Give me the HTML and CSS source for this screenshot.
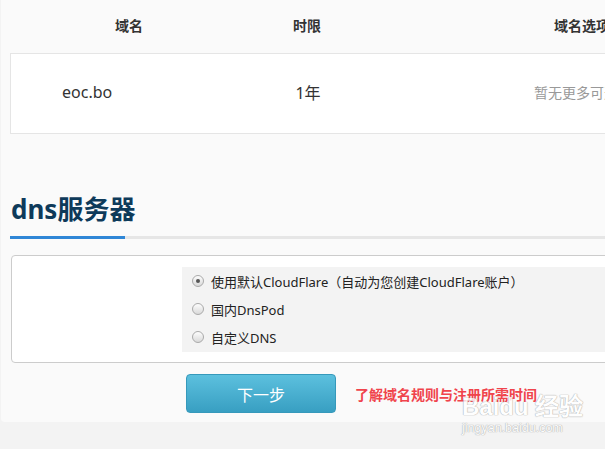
FILE: index.html
```html
<!DOCTYPE html>
<html lang="zh-CN">
<head>
  <meta charset="UTF-8" />
  <meta name="viewport" content="width=device-width, initial-scale=1.0"/>
  <title>域名注册 — dns服务器</title>
  <link rel="stylesheet" href="styles.css">
</head>
<body>
  <div class="panel">
    <div class="domain-table">
      <div class="thead">
        <div class="th">域名</div>
        <div class="th">时限</div>
        <div class="th">域名选项</div>
      </div>
      <div class="tbody">
        <div class="td td-name">eoc.bo</div>
        <div class="td">1年</div>
        <div class="td td-muted">暂无更多可选项</div>
      </div>
    </div>

    <section class="dns">
      <h2 class="section-title">dns服务器</h2>
      <div class="title-line"><span class="title-bar"></span></div>

      <div class="dns-box">
        <div class="dns-options">
          <label class="option"><span class="radio checked"></span>使用默认CloudFlare（自动为您创建CloudFlare账户）</label>
          <label class="option"><span class="radio"></span>国内DnsPod</label>
          <label class="option"><span class="radio"></span>自定义DNS</label>
        </div>
      </div>

      <div class="actions">
        <button class="btn-next">下一步</button>
        <a class="rules-link" href="#">了解域名规则与注册所需时间</a>
      </div>
    </section>
  </div>

  <div class="watermark">
    <span class="wm-logo">Bai<span class="wm-paw">du</span> 经验</span>
    <span class="wm-url">jingyan.baidu.com</span>
  </div>
</body>
</html>
```

FILE: styles.css
```css
* { box-sizing: border-box; margin: 0; padding: 0; }
body {
  background-color: #f3f3f3;
  color: #333;
  font-family: "Noto Sans", "Noto Sans CJK SC", sans-serif;
  overflow: hidden;
  position: relative;
  height: 449px;
}
.panel {
  background-color: #fafafa;
  border-radius: 0 0 0 4px;
  margin-left: 1px;
  padding: 0 0 9px 9px;
  width: 820px;
}

/* domain table */
.thead, .tbody {
  display: grid;
  grid-template-columns: 238px 118px 432px;
}
.thead {
  align-items: center;
  height: 53px;
  padding-bottom: 4px;
}
.th {
  color: #333;
  font-size: 14px;
  font-weight: bold;
  text-align: center;
}
.tbody {
  align-items: center;
  background-color: #fff;
  border: 1px solid #e5e5e5;
  height: 81px;
  padding-bottom: 4px;
}
.td {
  font-size: 16px;
  text-align: center;
}
.td-name {
  padding-left: 51px;
  text-align: left;
}
.td-muted {
  color: #999;
  font-size: 14px;
}

/* dns section */
.dns { padding-top: 57px; }
.section-title {
  color: #0e3a5a;
  font-size: 26px;
  font-weight: bold;
  line-height: 36px;
  padding-left: 1px;
}
.title-line {
  border-bottom: 3px solid #e6e6e6;
  margin-top: 9px;
}
.title-bar {
  background-color: #2f86d6;
  display: block;
  height: 3px;
  margin-bottom: -3px;
  width: 115px;
}
.dns-box {
  background-color: #fff;
  border: 1px solid #ccc;
  border-radius: 4px;
  margin: 16px 0 0 1px;
  padding: 11px 0 10px 170px;
}
.dns-options {
  background-color: #f3f3f3;
  padding: 0 0 1px 10px;
}
.option {
  align-items: center;
  color: #222;
  display: flex;
  font-size: 13px;
  gap: 7px;
  height: 28px;
}
.radio {
  background: linear-gradient(#fdfdfd, #d9d9d9);
  border: 1px solid #aaa;
  border-radius: 50%;
  display: inline-block;
  height: 12px;
  position: relative;
  width: 12px;
}
.radio.checked::after {
  background-color: #555;
  border-radius: 50%;
  content: "";
  height: 4px;
  left: 3px;
  position: absolute;
  top: 3px;
  width: 4px;
}

.actions {
  align-items: center;
  display: flex;
  gap: 19px;
  padding: 11px 0 0 176px;
}
.btn-next {
  background: linear-gradient(#5cc0de, #389fc2);
  border: 1px solid #3699bb;
  border-radius: 4px;
  color: #fff;
  font-family: inherit;
  font-size: 16px;
  height: 39px;
  width: 150px;
}
.rules-link {
  color: #f0444c;
  font-size: 14px;
  font-weight: bold;
  text-decoration: none;
}

/* baidu jingyan watermark */
.watermark {
  color: #fff;
  display: flex;
  flex-direction: column;
  left: 462px;
  line-height: 1;
  position: absolute;
  text-shadow: 0 0 1px #999, 0 0 1px #999;
  top: 395px;
}
.wm-logo {
  font-family: "Liberation Sans", sans-serif;
  font-size: 24px;
  font-weight: bold;
  opacity: .8;
}
.wm-url {
  font-family: "Liberation Sans", sans-serif;
  font-size: 12.5px;
  margin-top: 3px;
  opacity: .8;
}
```
